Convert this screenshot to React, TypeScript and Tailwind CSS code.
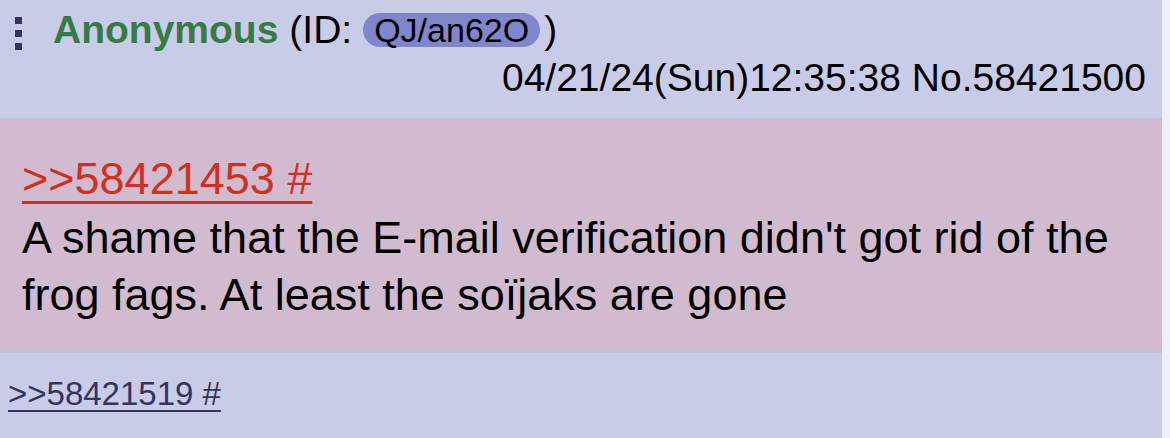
import React from "react";

export default function App() {
  const font = { fontFamily: '"Liberation Sans", Arial, sans-serif' };
  return (
    <div className="flex h-[438px] w-[1170px] overflow-hidden bg-[#eef0fb]" style={font}>
      <div className="flex w-[1162px] flex-col bg-[#c9cce6]">
        <div className="flex flex-col px-[15px] pt-[6px] pb-[16px] text-[39px] leading-[48px] text-black">
          <div className="flex items-center">
            <div className="mr-[31px] flex flex-col gap-[6px] self-start pt-[11px]">
              <span className="block h-[7px] w-[7px] bg-[#34345c]" />
              <span className="block h-[7px] w-[7px] bg-[#34345c]" />
              <span className="block h-[7px] w-[7px] bg-[#34345c]" />
            </div>
            <span className="font-bold text-[#367a48]">Anonymous</span>
            <span className="ml-[11px]">(ID:</span>
            <span className="ml-[11px] rounded-full bg-[#7f86cb] px-[11px] text-[34px] leading-[34px]">QJ/an62O</span>
            <span className="ml-[4px]">)</span>
          </div>
          <div className="flex justify-end pr-[1px]">
            <span>04/21/24(Sun)12:35:38 No.58421500</span>
          </div>
        </div>
        <div className="h-[2px] bg-[#b7c5d9]" />
        <div className="flex flex-col bg-[#d1bbcf] px-[22px] pt-[30px] pb-[28px] text-[45px] leading-[57px] text-black">
          <a href="#" className="self-start text-[45px] text-[#d1301f] underline decoration-[3px] underline-offset-[7px]">&gt;&gt;58421453 #</a>
          <p className="pt-[2px]">A shame that the E-mail verification didn't got rid of the frog fags. At least the soïjaks are gone</p>
        </div>
        <div className="h-[2px] bg-[#b7c5d9]" />
        <div className="flex px-[8px] pt-[21px] text-[33px] leading-[40px]">
          <a href="#" className="text-[#34345c] underline decoration-[2px] underline-offset-[5px]">&gt;&gt;58421519 #</a>
        </div>
      </div>
    </div>
  );
}
